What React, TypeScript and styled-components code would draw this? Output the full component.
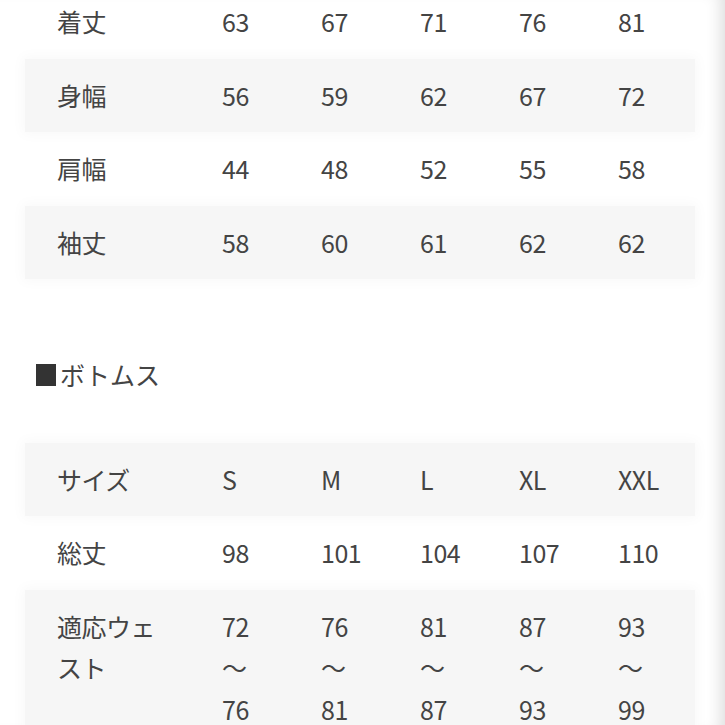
import React from "react";
import styled, { createGlobalStyle } from "styled-components";

const GlobalStyle = createGlobalStyle`
  html, body {
    margin: 0;
    padding: 0;
    background: #fff;
  }
  body {
    font-family: "Noto Sans CJK JP", "Noto Sans", sans-serif;
    color: #444;
  }
`;

const Page = styled.div`
  width: 725px;
  height: 725px;
  overflow: hidden;
  box-sizing: border-box;
  box-shadow: inset -16px 0 16px -12px rgba(0, 0, 0, 0.14);
`;

const Content = styled.div`
  margin-top: -15px;
  padding-left: 25px;
`;

const Table = styled.div`
  width: 670px;
  display: flex;
  flex-direction: column;
`;

const Row = styled.div<{ $shaded?: boolean }>`
  display: grid;
  grid-template-columns: 197px repeat(4, 99px) 1fr;
  align-items: start;
  padding: 16px 0;
  background: ${(p) => (p.$shaded ? "#f6f6f6" : "transparent")};
  box-shadow: ${(p) => (p.$shaded ? "0 0 12px 3px #f9f9f9" : "none")};
  font-size: 25px;
  line-height: 41.5px;
`;

const Label = styled.div`
  padding-left: 32px;
  width: 110px;
  letter-spacing: -0.5px;
`;

const Value = styled.div`
  width: 52px;
  letter-spacing: -0.5px;
`;

const Heading = styled.h2`
  margin: 75px 0 47px 10px;
  font-size: 25px;
  line-height: 41.5px;
  font-weight: 400;
  color: #444;
  display: flex;
  align-items: center;
`;

const Square = styled.span`
  display: inline-block;
  width: 20px;
  height: 22px;
  background: #333;
  margin: 0 4px 0 1px;
`;

type Line = { label: string; values: string[] };

const tops: Line[] = [
  { label: "着丈", values: ["63", "67", "71", "76", "81"] },
  { label: "身幅", values: ["56", "59", "62", "67", "72"] },
  { label: "肩幅", values: ["44", "48", "52", "55", "58"] },
  { label: "袖丈", values: ["58", "60", "61", "62", "62"] },
];

const bottoms: Line[] = [
  { label: "サイズ", values: ["S", "M", "L", "XL", "XXL"] },
  { label: "総丈", values: ["98", "101", "104", "107", "110"] },
  {
    label: "適応ウェスト",
    values: ["72 ～ 76", "76 ～ 81", "81 ～ 87", "87 ～ 93", "93 ～ 99"],
  },
];

const SizeTable: React.FC<{ rows: Line[]; shadeOdd: boolean }> = ({
  rows,
  shadeOdd,
}) => (
  <Table>
    {rows.map((r, i) => (
      <Row key={r.label} $shaded={shadeOdd ? i % 2 === 1 : i % 2 === 0}>
        <Label>{r.label}</Label>
        {r.values.map((v, j) => (
          <Value key={j}>{v}</Value>
        ))}
      </Row>
    ))}
  </Table>
);

const App: React.FC = () => {
  return (
    <Page>
      <GlobalStyle />
      <Content>
        <SizeTable rows={tops} shadeOdd />
        <Heading>
          <Square />
          ボトムス
        </Heading>
        <SizeTable rows={bottoms} shadeOdd={false} />
      </Content>
    </Page>
  );
};

export default App;
